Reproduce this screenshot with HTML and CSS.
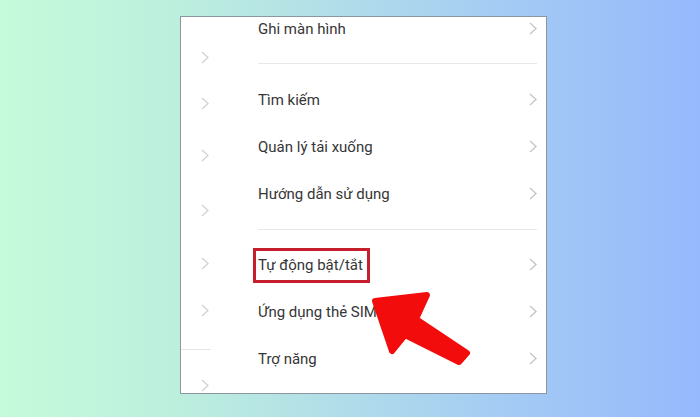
FILE: index.html
```html
<!DOCTYPE html>
<html lang="vi">
<head>
<meta charset="utf-8">
<link rel="stylesheet" href="styles.css">
</head>
<body>
<div class="stage">
  <div class="card">
    <div class="ghost">
      <div class="g-row h46"><svg class="chev ghost-chev" viewBox="0 0 8 13"><path d="M1 1 L7 6.5 L1 12"/></svg></div>
      <div class="g-row h46"><svg class="chev ghost-chev" viewBox="0 0 8 13"><path d="M1 1 L7 6.5 L1 12"/></svg></div>
      <div class="g-row h58"><svg class="chev ghost-chev" viewBox="0 0 8 13"><path d="M1 1 L7 6.5 L1 12"/></svg></div>
      <div class="g-row h52"><svg class="chev ghost-chev" viewBox="0 0 8 13"><path d="M1 1 L7 6.5 L1 12"/></svg></div>
      <div class="g-row h54"><svg class="chev ghost-chev" viewBox="0 0 8 13"><path d="M1 1 L7 6.5 L1 12"/></svg></div>
      <div class="g-row h40"><svg class="chev ghost-chev" viewBox="0 0 8 13"><path d="M1 1 L7 6.5 L1 12"/></svg></div>
      <div class="g-div"></div>
      <div class="g-row h70"><svg class="chev ghost-chev" viewBox="0 0 8 13"><path d="M1 1 L7 6.5 L1 12"/></svg></div>
    </div>
    <div class="list">
      <div class="row"><span>Ghi màn hình</span><svg class="chev" viewBox="0 0 8 13"><path d="M1 1 L7 6.5 L1 12"/></svg></div>
      <div class="divider d1"></div>
      <div class="row"><span>Tìm kiếm</span><svg class="chev" viewBox="0 0 8 13"><path d="M1 1 L7 6.5 L1 12"/></svg></div>
      <div class="row"><span>Quản lý tải xuống</span><svg class="chev" viewBox="0 0 8 13"><path d="M1 1 L7 6.5 L1 12"/></svg></div>
      <div class="row"><span>Hướng dẫn sử dụng</span><svg class="chev" viewBox="0 0 8 13"><path d="M1 1 L7 6.5 L1 12"/></svg></div>
      <div class="divider d2"></div>
      <div class="row"><span>Tự động bật/tắt</span><svg class="chev" viewBox="0 0 8 13"><path d="M1 1 L7 6.5 L1 12"/></svg></div>
      <div class="row"><span>Ứng dụng thẻ SIM</span><svg class="chev" viewBox="0 0 8 13"><path d="M1 1 L7 6.5 L1 12"/></svg></div>
      <div class="row"><span>Trợ năng</span><svg class="chev" viewBox="0 0 8 13"><path d="M1 1 L7 6.5 L1 12"/></svg></div>
    </div>
  </div>
  <div class="highlight"></div>
  <svg class="arrow" viewBox="0 0 700 417" width="700" height="417">
    <polygon points="375,301 427,295 416,319 467,353 459,362 405,335 392,351" />
  </svg>
</div>
</body>
</html>
```

FILE: styles.css
```css
html, body {
  margin: 0;
  padding: 0;
}
body {
  width: 700px;
  height: 417px;
  overflow: hidden;
  background: linear-gradient(90deg, #c5fbdb 0%, #bdefdd 25%, #b0dcea 50%, #a3c9f5 75%, #95b9fc 100%);
  font-family: Roboto, "Noto Sans", "Liberation Sans", sans-serif;
}
.stage {
  position: relative;
  width: 700px;
  height: 417px;
  padding: 16px 0 0 180px;
  box-sizing: border-box;
}
.card {
  width: 367px;
  height: 378px;
  box-sizing: border-box;
  border: 1px solid #8a97a3;
  background: #fff;
  overflow: hidden;
  display: grid;
  grid-template-columns: 77px 1fr;
}
.ghost {
  display: flex;
  flex-direction: column;
  padding-top: 17px;
}
.g-row {
  display: flex;
  align-items: center;
  padding-left: 20px;
  flex: none;
}
.h40 { height: 40px; }
.h46 { height: 46px; }
.h52 { height: 52px; }
.h54 { height: 54px; }
.h58 { height: 58px; }
.h70 { height: 70px; }
.g-div {
  height: 1px;
  width: 30px;
  background: #e4e4e4;
  margin-top: 19px;
  flex: none;
}
.list {
  margin-top: -12px;
  padding-right: 9px;
  display: flex;
  flex-direction: column;
}
.row {
  height: 47px;
  flex: none;
  display: flex;
  align-items: center;
  justify-content: space-between;
  font-size: 15px;
  color: #363636;
}
.divider {
  height: 1px;
  background: #e8e8e8;
  flex: none;
}
.d1 { margin: 11px 0 12px; }
.d2 { margin: 12px 0 11px; }
.chev {
  width: 8px;
  height: 13px;
  fill: none;
  stroke: #c4c4c4;
  stroke-width: 1.3;
  flex: none;
}
.ghost-chev {
  stroke: #d2d2d2;
}
.highlight {
  position: absolute;
  left: 253px;
  top: 248px;
  width: 117px;
  height: 35px;
  box-sizing: border-box;
  border: 3px solid #c61f2c;
}
.arrow {
  position: absolute;
  left: 0;
  top: 0;
}
.arrow polygon {
  fill: #f20c0c;
  stroke: #f20c0c;
  stroke-width: 6;
  stroke-linejoin: round;
}
```
